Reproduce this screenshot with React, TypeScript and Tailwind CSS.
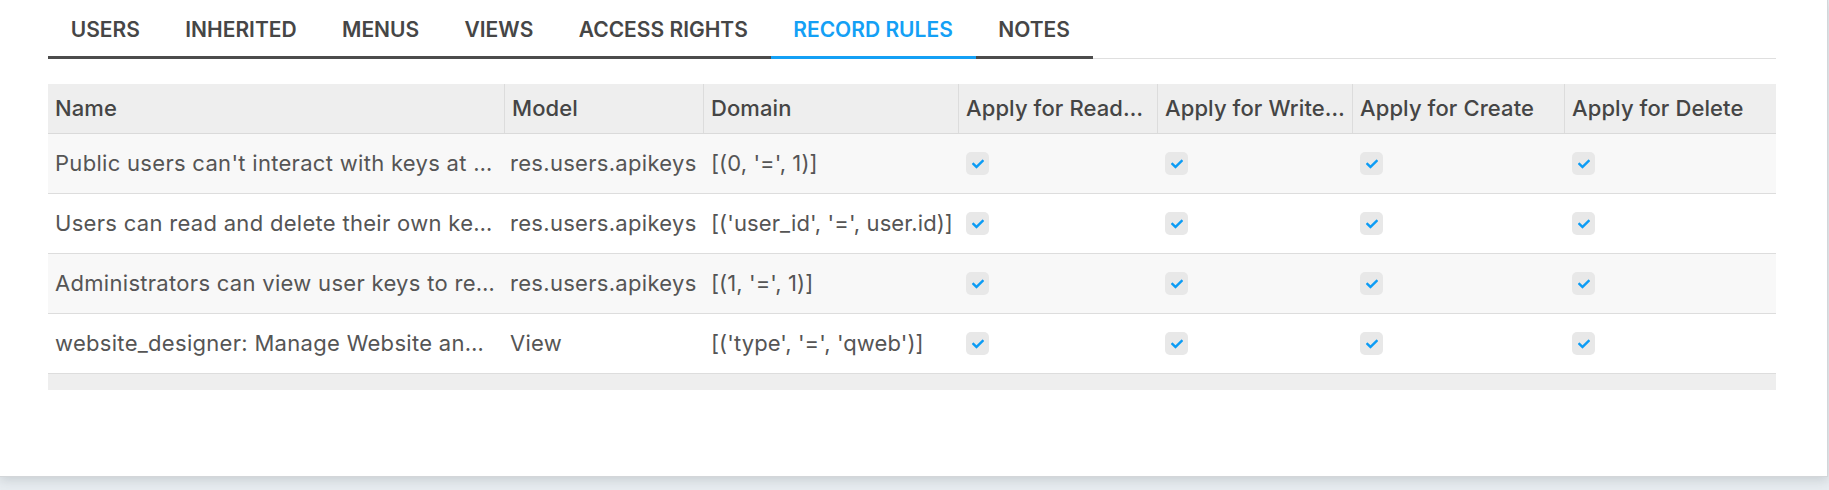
import React from "react";

const tabs = ["USERS", "INHERITED", "MENUS", "VIEWS", "ACCESS RIGHTS", "RECORD RULES", "NOTES"];

const rows = [
  { name: "Public users can't interact with keys at …", model: "res.users.apikeys", domain: "[(0, '=', 1)]" },
  { name: "Users can read and delete their own ke…", model: "res.users.apikeys", domain: "[('user_id', '=', user.id)]" },
  { name: "Administrators can view user keys to re…", model: "res.users.apikeys", domain: "[(1, '=', 1)]" },
  { name: "website_designer: Manage Website an…", model: "View", domain: "[('type', '=', 'qweb')]" },
];

const headers = ["Name", "Model", "Domain", "Apply for Read…", "Apply for Write…", "Apply for Create", "Apply for Delete"];

function Check() {
  return (
    <div className="w-[23px] h-[23px] rounded-[5px] bg-[#e8e8e8] flex items-center justify-center">
      <svg viewBox="0 0 512 512" className="w-[12px] h-[12px]" fill="#0c9cf5">
        <path d="M173.898 439.404l-166.4-166.4c-9.997-9.997-9.997-26.206 0-36.204l36.203-36.204c9.997-9.998 26.207-9.998 36.204 0L192 312.69 432.095 72.596c9.997-9.997 26.207-9.997 36.204 0l36.203 36.204c9.997 9.997 9.997 26.206 0 36.204l-294.4 294.401c-9.998 9.997-26.207 9.997-36.204-.001z" />
      </svg>
    </div>
  );
}

export default function App() {
  const grid = "grid grid-cols-[456px_199px_255px_199px_195px_212px_212px]";
  return (
    <div
      className="w-[1829px] h-[490px] bg-[#e7ecf0] overflow-hidden"
      style={{ fontFamily: "Inter, 'Noto Sans', sans-serif" }}
    >
      <div className="w-[1828px] h-[477px] bg-white border-r border-b border-[#d3d6d9] shadow-[0_3px_10px_rgba(60,70,80,0.18)] pl-[48px] pr-[51px]">
        <nav className="flex border-b border-[#dfdfdf]">
          {tabs.map((t) => {
            const active = t === "RECORD RULES";
            return (
              <div
                key={t}
                className={
                  "h-[59px] -mb-px px-[22.7px] pt-[4px] flex items-center text-[21px] font-semibold border-b-[3px] " +
                  (active ? "text-[#14a0f5] border-[#14a0f5]" : "text-[#464646] border-[#4c4c4c]")
                }
              >
                {t}
              </div>
            );
          })}
        </nav>

        <div className="mt-[25px] text-[22px] tracking-[0.3px]">
          <div className={grid + " h-[50px] bg-[#eeeeee] border-b border-[#dadada] text-[#454545] font-medium tracking-[0.1px]"}>
            {headers.map((h, i) => (
              <div
                key={h}
                className={
                  "flex items-center pl-[7px] pr-[2px] whitespace-nowrap overflow-hidden " +
                  (i > 0 ? "border-l border-[#dcdcdc]" : "")
                }
              >
                {h}
              </div>
            ))}
          </div>
          {rows.map((r, idx) => (
            <div
              key={idx}
              className={
                grid +
                " h-[60px] border-b border-[#dddddd] text-[#555555] " +
                (idx % 2 === 0 ? "bg-[#f8f8f8]" : "bg-white")
              }
            >
              <div className="flex items-center pl-[7px] whitespace-nowrap overflow-hidden">{r.name}</div>
              <div className="flex items-center pl-[6px] whitespace-nowrap overflow-hidden">{r.model}</div>
              <div className="flex items-center pl-[8px] whitespace-nowrap overflow-hidden tracking-[0.1px]">{r.domain}</div>
              {[0, 1, 2, 3].map((k) => (
                <div key={k} className="flex items-center pl-[8px]">
                  <Check />
                </div>
              ))}
            </div>
          ))}
          <div className="h-[16px] bg-[#eeeeee]" />
        </div>
      </div>
    </div>
  );
}
